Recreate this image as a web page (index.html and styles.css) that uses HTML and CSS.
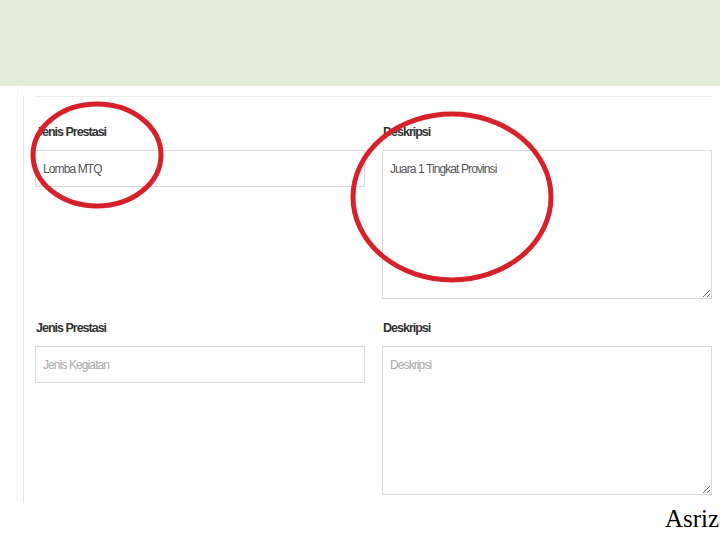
FILE: index.html
```html
<!DOCTYPE html>
<html lang="id">

<head>
    <meta charset="UTF-8">
    <meta name="viewport" content="width=device-width, initial-scale=1.0">
    <title>Form Prestasi</title>
    <link rel="stylesheet" href="styles.css">
</head>

<body>
    <div class="banner"></div>

    <div class="shot">
        <div class="content">
            <form class="prestasi-form">
                <div class="form-group">
                    <label for="jenis1">Jenis Prestasi</label>
                    <input type="text" id="jenis1" value="Lomba MTQ" placeholder="Jenis Kegiatan">
                </div>
                <div class="form-group">
                    <label for="desk1">Deskripsi</label>
                    <textarea id="desk1" placeholder="Deskripsi">Juara 1 Tingkat Provinsi</textarea>
                </div>
                <div class="form-group">
                    <label for="jenis2">Jenis Prestasi</label>
                    <input type="text" id="jenis2" placeholder="Jenis Kegiatan">
                </div>
                <div class="form-group">
                    <label for="desk2">Deskripsi</label>
                    <textarea id="desk2" placeholder="Deskripsi"></textarea>
                </div>
            </form>
        </div>
    </div>

    <div class="footer">Asriza</div>

    <!-- lingkaran merah penanda -->
    <svg class="marks" width="720" height="540" viewBox="0 0 720 540">
        <ellipse cx="97" cy="155" rx="64" ry="51" />
        <ellipse cx="452" cy="197" rx="99" ry="83" />
    </svg>
</body>

</html>
```

FILE: styles.css
```css
html,
body {
    margin: 0;
    padding: 0;
    overflow: hidden;
}

body {
    position: relative;
    width: 720px;
    height: 540px;
    background-color: #ffffff;
    font-family: "Liberation Sans", Arial, sans-serif;
}

.banner {
    height: 86px;
    background-color: #e2eed9;
}

.shot {
    height: 417px;
    width: 695px;
    margin-left: 17px;
    border-left: 1px solid #f4f4f4;
    box-sizing: border-box;
    overflow: hidden;
}

.content {
    height: 100%;
    margin-left: 5px;
    border-left: 1px solid #e4e4e4;
    padding-left: 11px;
}

.prestasi-form {
    margin-top: 10px;
    border-top: 1px solid #ececec;
    padding-top: 27px;
    display: grid;
    grid-template-columns: 330px 330px;
    column-gap: 17px;
    row-gap: 21px;
    align-items: start;
}

.form-group label {
    display: block;
    height: 17px;
    line-height: 17px;
    margin-bottom: 9px;
    padding-left: 1px;
    font-size: 12.5px;
    font-weight: bold;
    letter-spacing: -1px;
    color: #333333;
}

.form-group input,
.form-group textarea {
    display: block;
    width: 100%;
    box-sizing: border-box;
    border: 1px solid #d9d9d9;
    border-radius: 0;
    background-color: #ffffff;
    padding: 11px 7px 8px;
    font-family: inherit;
    font-size: 12px;
    letter-spacing: -0.9px;
    color: #555555;
    outline: none;
}

.form-group input {
    height: 37px;
    padding-top: 8px;
}

.form-group textarea {
    height: 149px;
    resize: vertical;
}

.form-group input::placeholder,
.form-group textarea::placeholder {
    color: #a8a8a8;
}

.footer {
    padding-left: 665px;
    padding-top: 2px;
    white-space: nowrap;
    font-family: "Liberation Serif", serif;
    font-size: 25px;
    line-height: 28px;
    color: #000000;
}

.marks {
    position: absolute;
    left: 0;
    top: 0;
    pointer-events: none;
}

.marks ellipse {
    fill: none;
    stroke: #d7202a;
    stroke-width: 5;
}
```
